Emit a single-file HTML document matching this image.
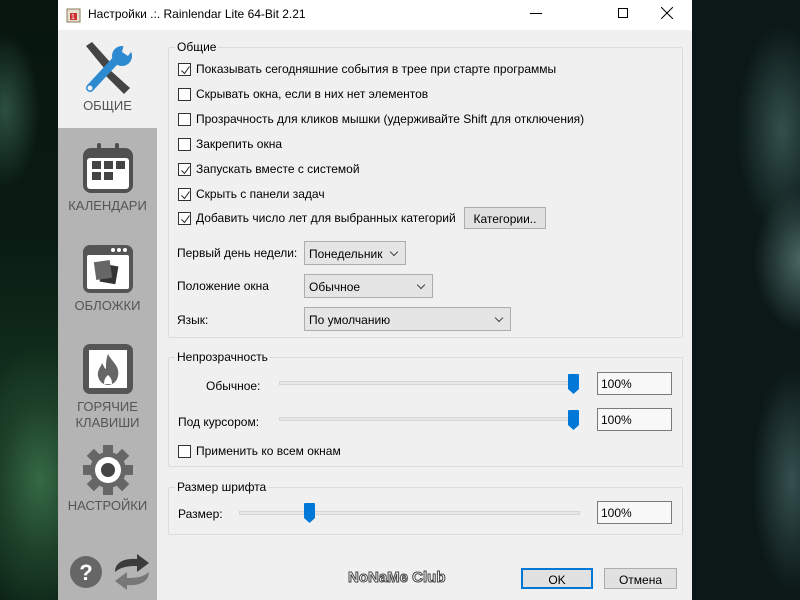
<!DOCTYPE html>
<html><head><meta charset="utf-8"><style>
*{margin:0;padding:0;box-sizing:border-box}
body{width:800px;height:600px;overflow:hidden;position:relative;font-family:"Liberation Sans","DejaVu Sans",sans-serif;font-size:12px;color:#000;
background:#0d1a16}
.bgl{position:absolute;left:0;top:0;width:58px;height:600px;background:
radial-gradient(ellipse 50px 110px at 5px 110px,#2c5040 0%,rgba(30,60,45,0) 70%),
radial-gradient(ellipse 80px 150px at 40px 480px,#356a45 0%,#1d4029 50%,rgba(10,30,20,0) 90%),
linear-gradient(#08150f,#0a1c12 40%,#123320 70%,#0d2517)}
.bgr{position:absolute;left:692px;top:0;width:108px;height:600px;background:
radial-gradient(ellipse 60px 140px at 90px 130px,#33504d 0%,rgba(40,60,58,0) 75%),
radial-gradient(ellipse 60px 90px at 110px 260px,#4a6966 0%,rgba(40,60,60,0) 80%),
radial-gradient(ellipse 50px 140px at 100px 480px,#35504f 0%,rgba(20,40,40,0) 80%),
#0b1817}
.win{position:absolute;left:58px;top:0;width:634px;height:600px;background:#f0f0f0}
.title{position:absolute;left:0;top:0;width:634px;height:30px;background:#fff}
.title span{position:absolute;left:30px;top:7px;font-size:12px}
.side{position:absolute;left:0;top:30px;width:99px;height:570px;background:#b4b4b4}
.sel{position:absolute;left:0;top:0;width:99px;height:98px;background:#f0f0f0}
.lbl{position:absolute;width:99px;text-align:center;color:#555;font-size:13px;left:0;line-height:16px}
.t{position:absolute;white-space:nowrap}
.grp{position:absolute;border:1px solid #dcdcdc;border-radius:2px}
.gt{position:absolute;background:#f0f0f0;padding:0 2px;top:-8px;left:6px}
.cb{position:absolute;width:13px;height:13px;border:1px solid #333;background:#fff}
.cb svg{position:absolute;left:1px;top:1px}
.dd{position:absolute;height:24px;background:#e5e5e5;border:1px solid #adadad;padding:5px 4px}
.dd:after{content:"";position:absolute;right:8px;top:7px;width:5px;height:5px;border-right:1px solid #444;border-bottom:1px solid #444;transform:rotate(45deg)}
.btn{position:absolute;background:#e1e1e1;border:1px solid #adadad;text-align:center}
.track{position:absolute;height:4px;background:#e7e7e7;border:1px solid #d6d6d6}
.thumb{position:absolute;width:11px;height:20px}
.edit{position:absolute;width:75px;height:23px;background:#f8f8f8;border:1px solid #7a7a7a;padding:4px 3px}
</style></head><body>
<div class="bgl"></div><div class="bgr"></div>
<div class="win">
 <div class="title">
  <svg style="position:absolute;left:7px;top:6px" width="18" height="18"><rect x="2" y="3" width="13" height="13" fill="#e8e0d0" stroke="#8a7a5a"/><rect x="5" y="7" width="7" height="7" fill="#c33"/><text x="6" y="13" font-size="7" fill="#fff">1</text></svg>
  <span>Настройки .:. Rainlendar Lite 64-Bit 2.21</span>
  <div style="position:absolute;left:472px;top:13px;width:12px;height:1px;background:#000"></div>
  <div style="position:absolute;left:560px;top:8px;width:10px;height:10px;border:1px solid #000"></div>
  <svg style="position:absolute;left:603px;top:7px" width="12" height="12"><path d="M0 0L12 12M12 0L0 12" stroke="#000" stroke-width="1"/></svg>
 </div>
 <div class="side">
  <div class="sel"></div>
  <svg style="position:absolute;left:22px;top:10px" width="58" height="58" viewBox="0 0 58 58">
   <path d="M6 6l6-4 18 20-6 6z" fill="#444"/><path d="M30 30l20 18-6 6-20-20z" fill="#444"/>
   <path d="M10 48L36 20" stroke="#2e8ad0" stroke-width="8" stroke-linecap="round"/>
   <circle cx="42" cy="16" r="10" fill="#2e8ad0"/><path d="M44 4l10 4-6 8-6-4z" fill="#f0f0f0"/>
   <circle cx="10" cy="48" r="2.5" fill="#f0f0f0"/>
  </svg>
  <div class="lbl" style="top:68px">ОБЩИЕ</div>
  <svg style="position:absolute;left:25px;top:113px" width="50" height="51"><rect x="0" y="5" width="50" height="45" rx="8" fill="#505050"/><rect x="4" y="15" width="42" height="31" rx="3" fill="#fff"/><rect x="14" y="0" width="4" height="10" rx="2" fill="#505050"/><rect x="32" y="0" width="4" height="10" rx="2" fill="#505050"/><rect x="9" y="18" width="9" height="8" fill="#444"/><rect x="21" y="18" width="9" height="8" fill="#444"/><rect x="33" y="18" width="9" height="8" fill="#444"/><rect x="9" y="29" width="9" height="8" fill="#444"/><rect x="21" y="29" width="9" height="8" fill="#444"/></svg>
  <div class="lbl" style="top:168px">КАЛЕНДАРИ</div>
  <svg style="position:absolute;left:25px;top:215px" width="50" height="48"><rect x="0" y="0" width="50" height="48" rx="7" fill="#555"/><rect x="4" y="10" width="42" height="34" rx="2" fill="#fff"/><circle cx="30" cy="5" r="2" fill="#fff"/><circle cx="36" cy="5" r="2" fill="#fff"/><circle cx="42" cy="5" r="2" fill="#fff"/><rect x="18" y="20" width="16" height="18" fill="#333" transform="rotate(10 26 29)"/><rect x="12" y="16" width="16" height="18" fill="#666" transform="rotate(-8 20 25)"/></svg>
  <div class="lbl" style="top:268px">ОБЛОЖКИ</div>
  <svg style="position:absolute;left:25px;top:314px" width="50" height="50"><rect x="0" y="0" width="50" height="50" rx="7" fill="#555"/><rect x="6" y="6" width="38" height="38" fill="#fff"/><path d="M25 10c4 8 12 12 10 22c-1 6-6 9-10 9s-9-3-10-9c-1-6 3-9 4-13c2 3 2 5 4 6c0-5 0-10 2-15z" fill="#666"/><path d="M21 40c0-5 2-7 4-9c2 2 4 4 4 9z" fill="#fff"/></svg>
  <div class="lbl" style="top:369px">ГОРЯЧИЕ<br>КЛАВИШИ</div>
  <svg style="position:absolute;left:25px;top:415px" width="50" height="50" viewBox="0 0 50 50"><g fill="#666"><circle cx="25" cy="25" r="18"/><rect x="20" y="0" width="10" height="50"/><rect x="0" y="20" width="50" height="10"/><rect x="20" y="0" width="10" height="50" transform="rotate(45 25 25)"/><rect x="20" y="0" width="10" height="50" transform="rotate(-45 25 25)"/></g><circle cx="25" cy="25" r="13" fill="#fff"/><circle cx="25" cy="25" r="7" fill="#444"/></svg>
  <div class="lbl" style="top:468px">НАСТРОЙКИ</div>
  <svg style="position:absolute;left:11px;top:525px" width="34" height="34"><circle cx="17" cy="17" r="16" fill="#666"/><text x="17" y="25" text-anchor="middle" font-size="22" font-weight="bold" fill="#fff" font-family="Liberation Sans">?</text></svg>
  <svg style="position:absolute;left:55px;top:522px" width="38" height="40"><path d="M2 20c0-10 10-14 22-13V2l12 9-12 9v-6C14 14 8 15 2 20z" fill="#3c3c3c"/><path d="M36 20c0 10-10 14-22 13v5L2 29l12-9v6c10 0 16-1 22-6z" fill="#777"/></svg>
 </div>

 <div class="grp" style="left:110px;top:47px;width:515px;height:291px"><div class="gt">Общие</div></div>
 <div class="cb" style="left:120px;top:63px"><svg width="11" height="11"><path d="M1.5 5.5l3 3 5-7" stroke="#222" fill="none"/></svg></div><div class="t" style="left:138px;top:62px">Показывать сегодняшние события в трее при старте программы</div>
 <div class="cb" style="left:120px;top:88px"></div><div class="t" style="left:138px;top:87px">Скрывать окна, если в них нет элементов</div>
 <div class="cb" style="left:120px;top:113px"></div><div class="t" style="left:138px;top:112px">Прозрачность для кликов мышки (удерживайте Shift для отключения)</div>
 <div class="cb" style="left:120px;top:138px"></div><div class="t" style="left:138px;top:137px">Закрепить окна</div>
 <div class="cb" style="left:120px;top:163px"><svg width="11" height="11"><path d="M1.5 5.5l3 3 5-7" stroke="#222" fill="none"/></svg></div><div class="t" style="left:138px;top:162px">Запускать вместе с системой</div>
 <div class="cb" style="left:120px;top:188px"><svg width="11" height="11"><path d="M1.5 5.5l3 3 5-7" stroke="#222" fill="none"/></svg></div><div class="t" style="left:138px;top:187px">Скрыть с панели задач</div>
 <div class="cb" style="left:120px;top:212px"><svg width="11" height="11"><path d="M1.5 5.5l3 3 5-7" stroke="#222" fill="none"/></svg></div><div class="t" style="left:138px;top:211px">Добавить число лет для выбранных категорий</div>
 <div class="btn" style="left:406px;top:207px;width:82px;height:22px;padding-top:4px">Категории..</div>
 <div class="t" style="left:119px;top:246px">Первый день недели:</div>
 <div class="dd" style="left:246px;top:241px;width:102px">Понедельник</div>
 <div class="t" style="left:119px;top:279px">Положение окна</div>
 <div class="dd" style="left:246px;top:274px;width:129px">Обычное</div>
 <div class="t" style="left:119px;top:313px">Язык:</div>
 <div class="dd" style="left:246px;top:307px;width:207px">По умолчанию</div>

 <div class="grp" style="left:110px;top:357px;width:515px;height:110px"><div class="gt">Непрозрачность</div></div>
 <div class="t" style="left:148px;top:379px">Обычное:</div>
 <div class="track" style="left:221px;top:381px;width:295px"></div>
 <svg class="thumb" style="left:510px;top:374px" width="11" height="20"><path d="M0 1q0-1 1-1h9q1 0 1 1v14l-5.5 5-5.5-5z" fill="#0078d7"/></svg>
 <div class="edit" style="left:539px;top:372px">100%</div>
 <div class="t" style="left:120px;top:415px">Под курсором:</div>
 <div class="track" style="left:221px;top:417px;width:295px"></div>
 <svg class="thumb" style="left:510px;top:410px" width="11" height="20"><path d="M0 1q0-1 1-1h9q1 0 1 1v14l-5.5 5-5.5-5z" fill="#0078d7"/></svg>
 <div class="edit" style="left:539px;top:408px">100%</div>
 <div class="cb" style="left:120px;top:445px"></div><div class="t" style="left:138px;top:444px">Применить ко всем окнам</div>

 <div class="grp" style="left:110px;top:487px;width:515px;height:48px"><div class="gt">Размер шрифта</div></div>
 <div class="t" style="left:120px;top:507px">Размер:</div>
 <div class="track" style="left:181px;top:511px;width:341px"></div>
 <svg class="thumb" style="left:246px;top:503px" width="11" height="20"><path d="M0 1q0-1 1-1h9q1 0 1 1v14l-5.5 5-5.5-5z" fill="#0078d7"/></svg>
 <div class="edit" style="left:539px;top:501px">100%</div>

 <div class="t" style="left:290px;top:569px;font-size:15px;color:#fff;-webkit-text-stroke:1px #444;font-weight:bold;letter-spacing:0px">NoNaMe Club</div>
 <div class="btn" style="left:463px;top:568px;width:72px;height:21px;border:2px solid #0078d7;padding-top:3px">OK</div>
 <div class="btn" style="left:546px;top:568px;width:73px;height:21px;padding-top:4px">Отмена</div>
</div>
</body></html>
